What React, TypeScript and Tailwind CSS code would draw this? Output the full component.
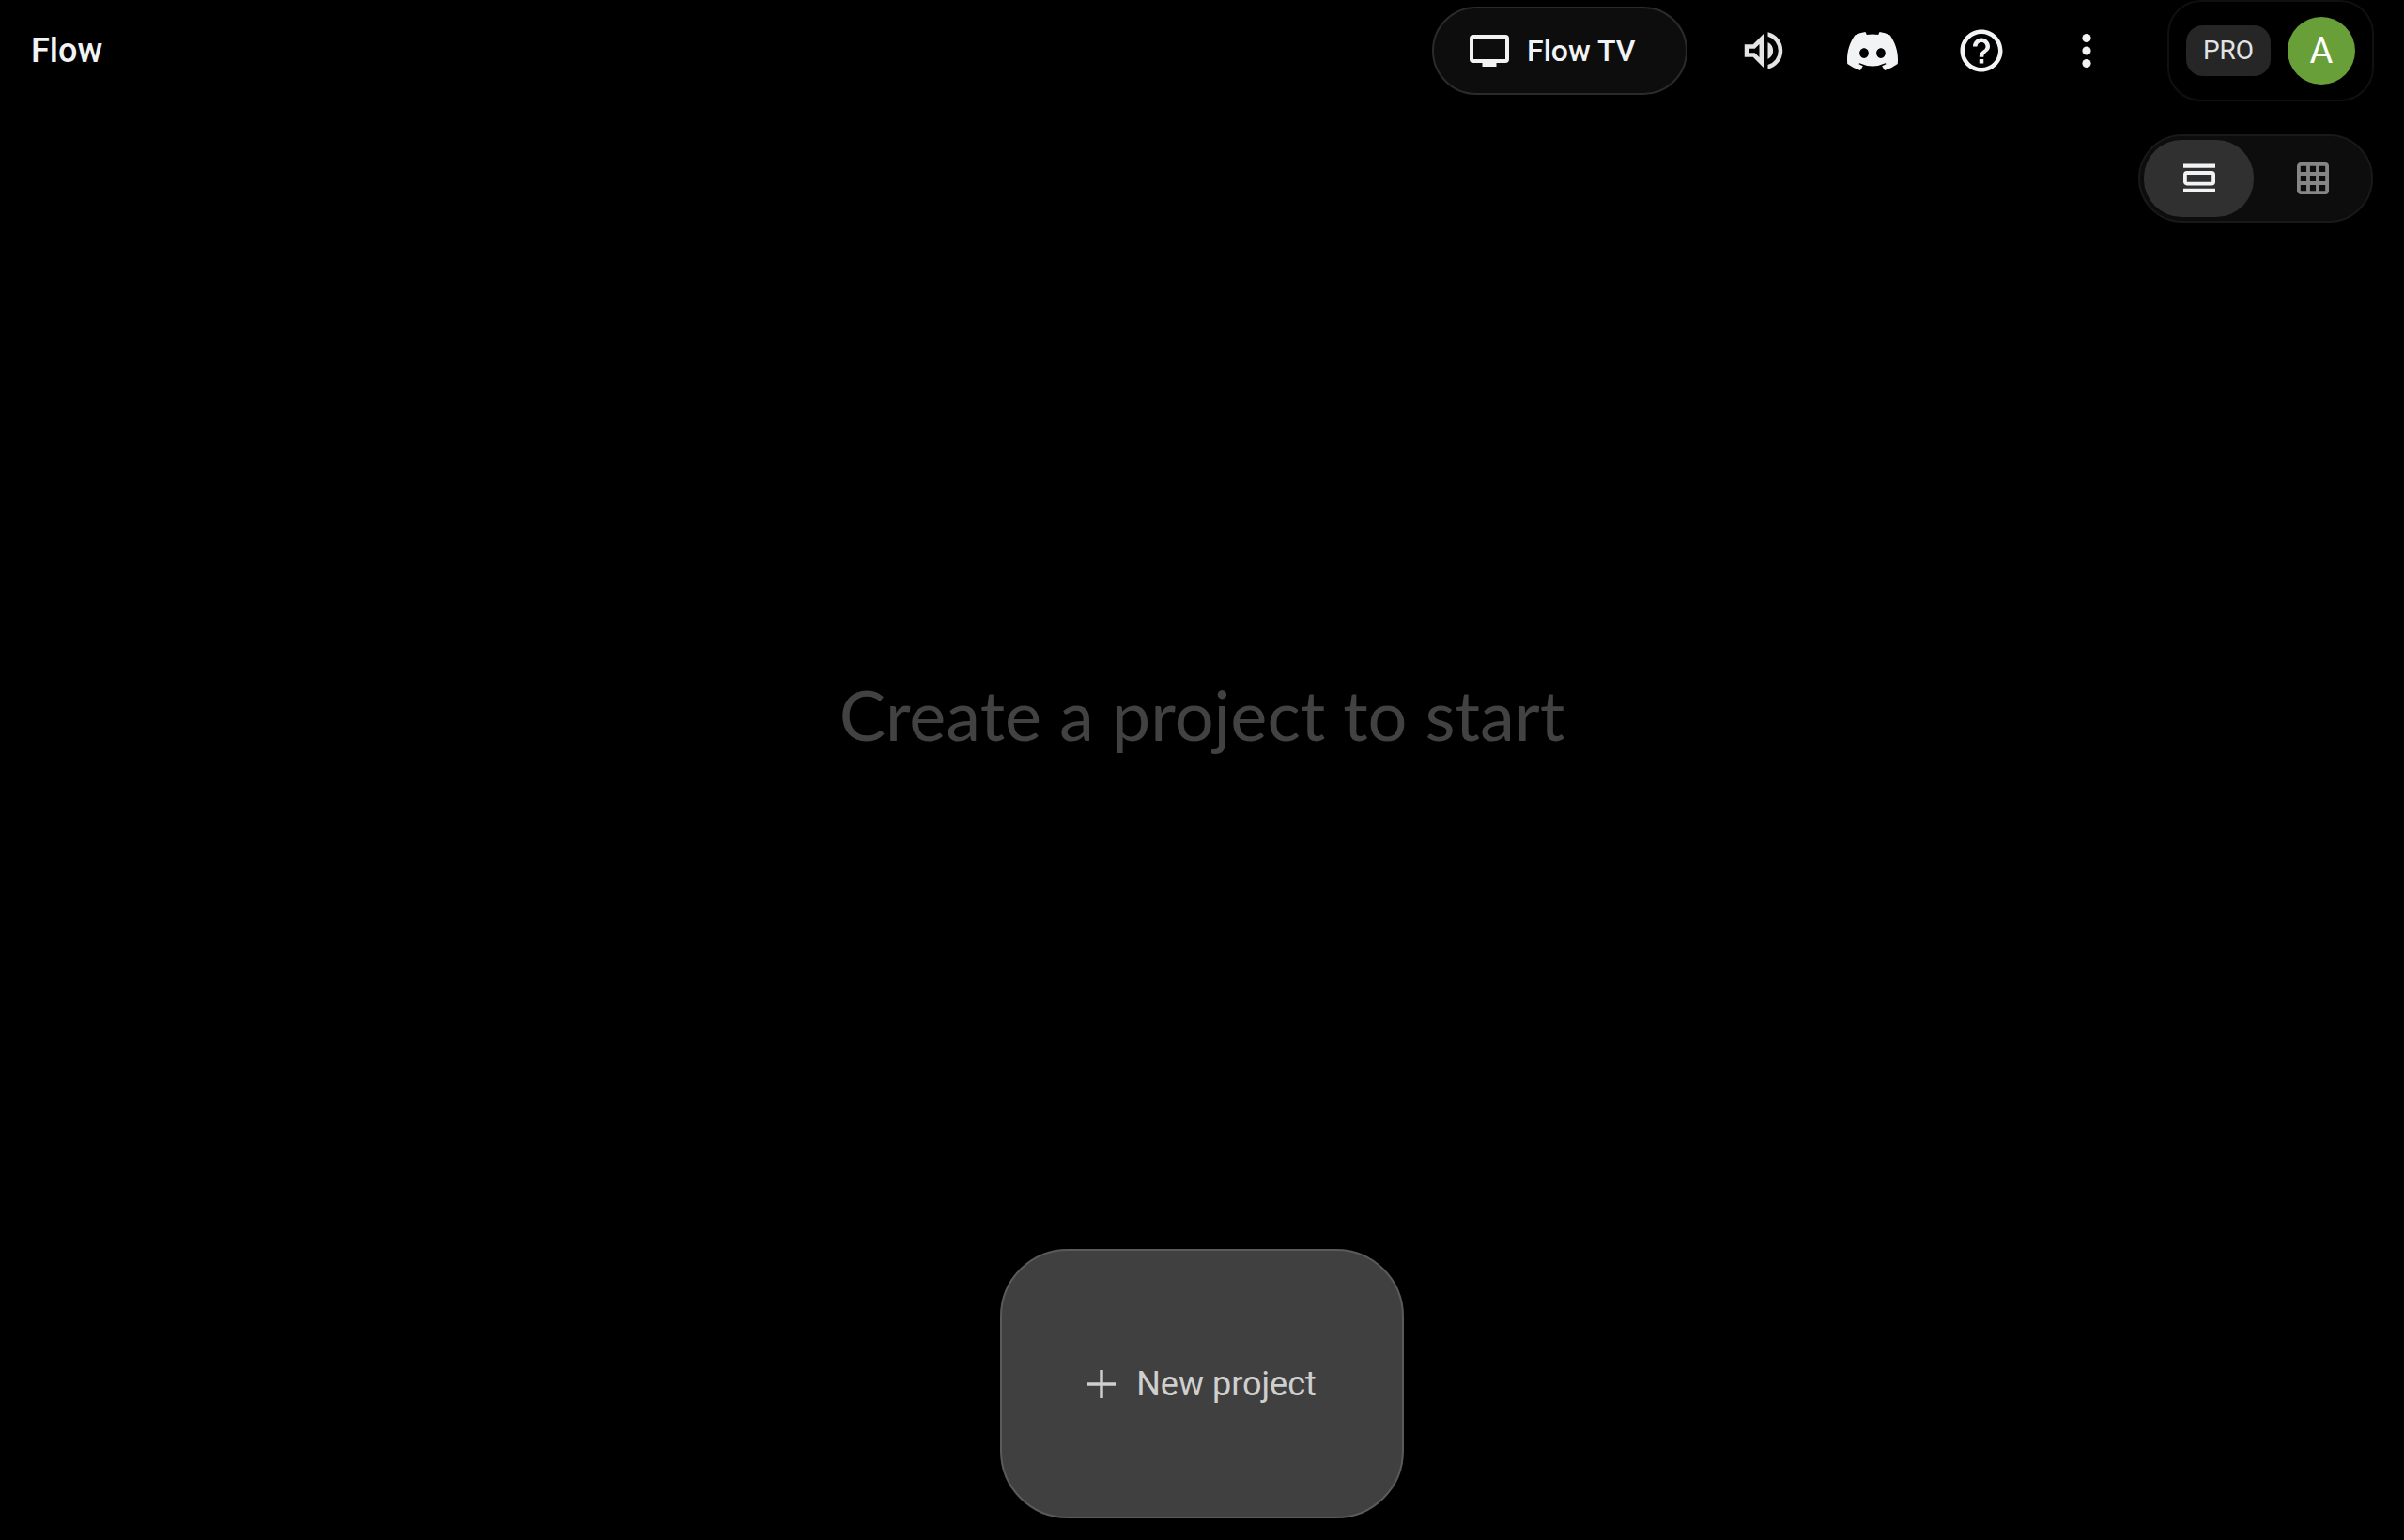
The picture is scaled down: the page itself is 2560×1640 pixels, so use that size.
import { useState } from 'react'
import type { ReactNode } from 'react'
import { MdHelpOutline } from 'react-icons/md'

function TvIcon() {
  return (
    <svg viewBox="0 0 42 34" className="h-[34px] w-[42px]" fill="none" aria-hidden="true">
      <rect x="2" y="2" width="38" height="26" rx="2" stroke="currentColor" strokeWidth="4" />
      <path d="M13.5 29h15v5h-15z" fill="currentColor" />
    </svg>
  )
}

function VolumeIcon() {
  return (
    <svg viewBox="0 -960 960 960" className="size-[54px]" fill="currentColor" aria-hidden="true">
      <path d="M560-131v-82q90-26 145-100t55-168q0-94-55-168T560-749v-82q124 28 202 125.5T840-481q0 127-78 224.5T560-131ZM120-360v-240h160l200-200v640L280-360H120Zm440 40v-322q47 22 73.5 66t26.5 96q0 51-26.5 94.5T560-320ZM400-606l-86 86H200v80h114l86 86v-252Z" />
    </svg>
  )
}

function DiscordIcon() {
  return (
    <svg viewBox="0 0 127.14 96.36" className="h-[41px] w-[54px]" fill="currentColor" aria-hidden="true">
      <path d="M107.7,8.07A105.15,105.15,0,0,0,81.47,0a72.06,72.06,0,0,0-3.36,6.83A97.68,97.68,0,0,0,49,6.83,72.37,72.37,0,0,0,45.64,0,105.89,105.89,0,0,0,19.39,8.09C2.79,32.65-1.71,56.6.54,80.21h0A105.73,105.73,0,0,0,32.71,96.36,77.7,77.7,0,0,0,39.6,85.25a68.42,68.42,0,0,1-10.85-5.18c.91-.66,1.8-1.34,2.66-2a75.57,75.57,0,0,0,64.32,0c.87.71,1.76,1.39,2.66,2a68.68,68.68,0,0,1-10.87,5.19,77,77,0,0,0,6.89,11.1A105.25,105.25,0,0,0,126.6,80.22h0C129.24,52.84,122.09,29.11,107.7,8.07ZM42.45,65.69C36.18,65.69,31,60,31,53s5-12.74,11.43-12.74S54,46,53.89,53,48.84,65.69,42.45,65.69Zm42.24,0C78.41,65.69,73.25,60,73.25,53s5-12.74,11.44-12.74S96.23,46,96.12,53,91.08,65.69,84.69,65.69Z" />
    </svg>
  )
}

function MoreIcon() {
  return (
    <svg viewBox="0 0 10 38" className="h-[38px] w-[10px]" fill="currentColor" aria-hidden="true">
      <circle cx="5" cy="5.5" r="4.6" />
      <circle cx="5" cy="19" r="4.6" />
      <circle cx="5" cy="32.5" r="4.6" />
    </svg>
  )
}

function ListViewIcon() {
  return (
    <svg viewBox="0 0 34 34" className="size-[34px]" fill="none" aria-hidden="true">
      <path d="M0 1.5h34v4.2H0zM0 27.8h34v4.2H0z" fill="currentColor" />
      <rect x="1.9" y="11" width="30.2" height="11.6" rx="2" stroke="currentColor" strokeWidth="3.8" />
    </svg>
  )
}

function GridViewIcon() {
  return (
    <svg viewBox="0 0 34 34" className="size-[34px]" fill="none" stroke="currentColor" strokeWidth="3.8" aria-hidden="true">
      <rect x="1.9" y="1.9" width="30.2" height="30.2" rx="2" />
      <path d="M12 2v30M22 2v30M2 12h30M2 22h30" />
    </svg>
  )
}

function PlusIcon() {
  return (
    <svg viewBox="0 0 30 30" className="size-[30px]" fill="none" stroke="currentColor" strokeWidth="3.4" aria-hidden="true">
      <path d="M15 0v30M0 15h30" />
    </svg>
  )
}

function IconButton({ label, children }: { label: string; children: ReactNode }) {
  return (
    <button type="button" aria-label={label} className="grid h-24 w-24 place-items-center rounded-full">
      {children}
    </button>
  )
}

function ViewToggle() {
  const [view, setView] = useState<'list' | 'grid'>('list')
  const base = 'grid h-[82px] w-[117px] place-items-center rounded-[40px]'
  const on = 'bg-[#303030] text-[#f1f3f4]'
  const off = 'text-[#868686]'

  return (
    <div className="flex gap-1 rounded-[47px] border-2 border-[#191919] bg-[#0d0d0d] p-1">
      <button
        type="button"
        aria-label="List view"
        aria-pressed={view === 'list'}
        onClick={() => setView('list')}
        className={`${base} ${view === 'list' ? on : off}`}
      >
        <ListViewIcon />
      </button>
      <button
        type="button"
        aria-label="Grid view"
        aria-pressed={view === 'grid'}
        onClick={() => setView('grid')}
        className={`${base} ${view === 'grid' ? on : off}`}
      >
        <GridViewIcon />
      </button>
    </div>
  )
}

export default function App() {
  return (
    <div className="flex min-h-screen flex-col bg-black font-['Roboto','Inter',sans-serif] text-[#f1f3f4]">
      <header className="flex items-center justify-between pr-8 pl-[33px]">
        <a href="#" className="text-[36px] font-medium leading-[44px]">
          Flow
        </a>

        <div className="flex items-center">
          <button
            type="button"
            className="mr-[33px] flex h-[94px] w-[272px] items-center gap-[19px] rounded-[47px] border-2 border-[#2b2b2b] bg-[#0d0d0d] pl-[38px] text-[32px] font-medium leading-[40px]"
          >
            <TvIcon />
            Flow TV
          </button>
          <nav className="mr-[42px] flex items-center gap-5">
            <IconButton label="Sound">
              <span className="text-[#e4e4e4]">
                <VolumeIcon />
              </span>
            </IconButton>
            <IconButton label="Discord">
              <DiscordIcon />
            </IconButton>
            <IconButton label="Help">
              <MdHelpOutline className="size-[54px]" />
            </IconButton>
            <button type="button" aria-label="More options" className="grid h-24 w-[88px] place-items-center rounded-full">
              <MoreIcon />
            </button>
          </nav>
          <button
            type="button"
            aria-label="Account"
            className="flex h-[108px] items-center gap-[18px] rounded-[36px] border-2 border-[#101010] px-[18px]"
          >
            <span className="grid h-[54px] w-[90px] place-items-center rounded-[18px] bg-[#262626] text-[28px] leading-[36px] text-[#e3e3e3]">
              PRO
            </span>
            <span className="grid size-[72px] place-items-center rounded-full bg-[#689f38] text-[38px] leading-[44px] text-white">
              A
            </span>
          </button>
        </div>
      </header>

      <div className="mt-[35px] flex justify-end pr-[33px]">
        <ViewToggle />
      </div>

      <main className="flex flex-1 flex-col items-center justify-between pt-[480px] pb-[23px]">
        <h1 className="font-['Lato','Roboto',sans-serif] text-[74px] leading-[88px] text-[#424242]">
          Create a project to start
        </h1>
        <button
          type="button"
          className="flex h-[287px] w-[430px] items-center justify-center gap-[22px] rounded-[72px] border-2 border-[#5a5a5a] bg-[#404040] text-[36px] leading-[44px] text-[#cfcfcf]"
        >
          <PlusIcon />
          New project
        </button>
      </main>
    </div>
  )
}
